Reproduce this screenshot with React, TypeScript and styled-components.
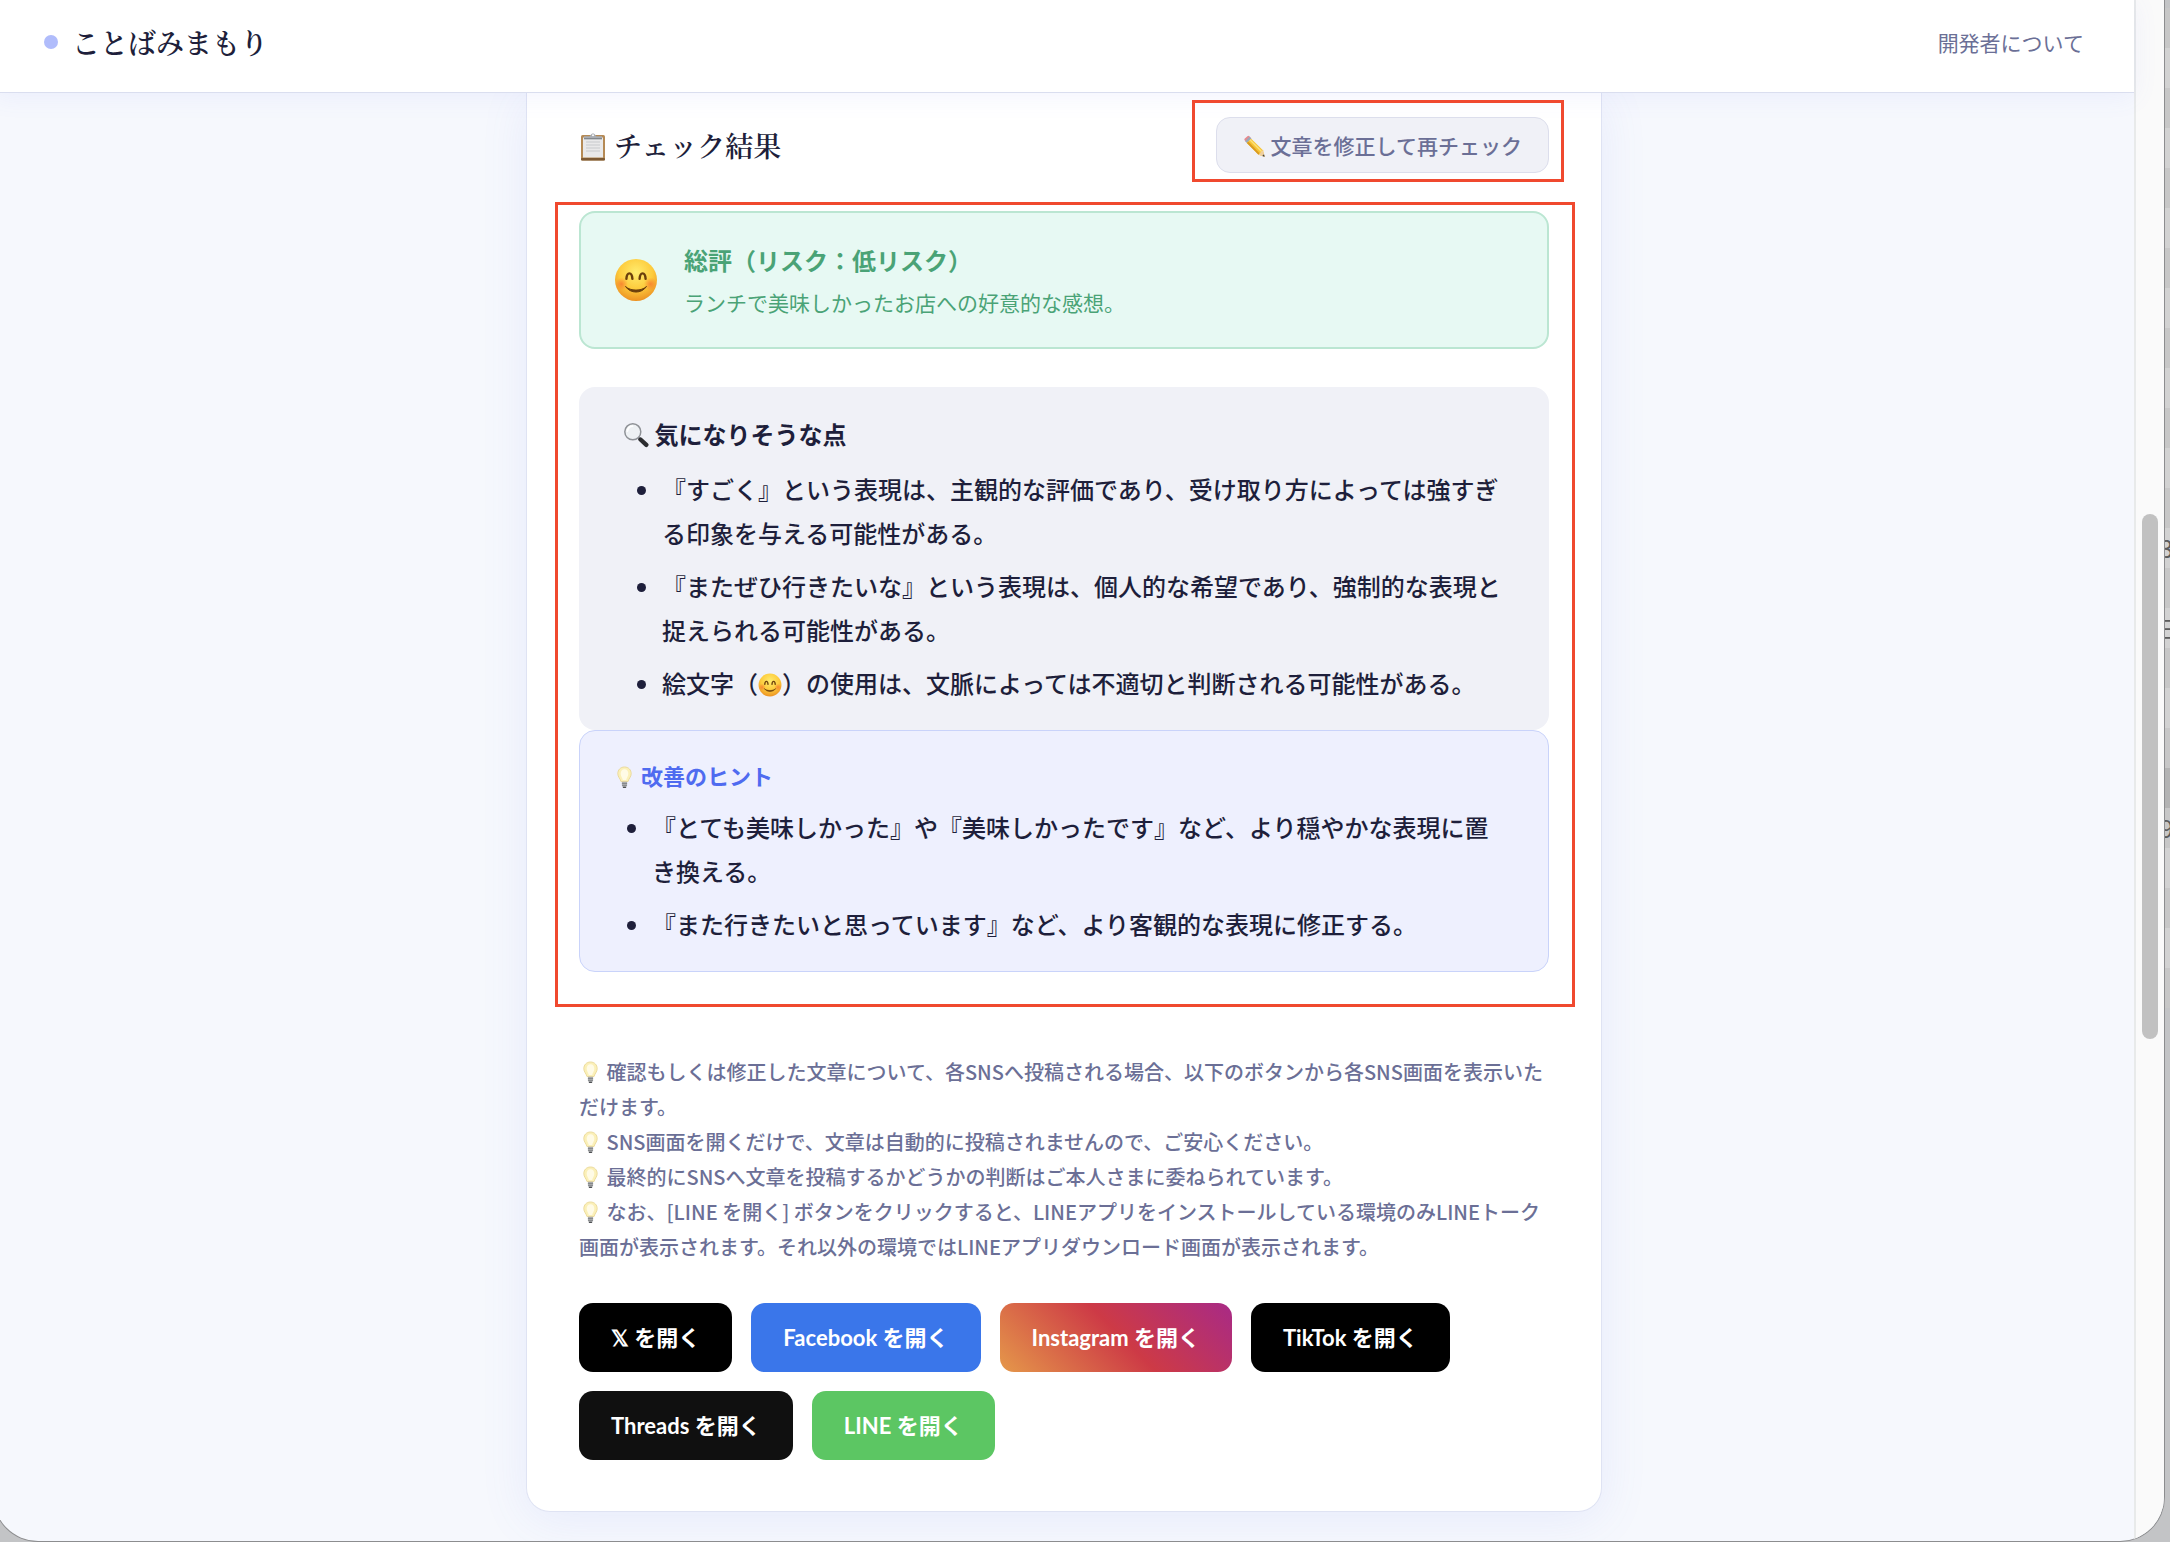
import React from "react";
import styled, { createGlobalStyle, css } from "styled-components";

const ink = "#1e1f3b";
const muted = "#6b6f96";
const sans = `"Noto Sans CJK JP", "Noto Sans", sans-serif`;
const serif = `"Noto Serif CJK JP", "Noto Sans CJK JP", serif`;
const label = `Lato, "Noto Sans CJK JP", sans-serif`;

const GlobalStyle = createGlobalStyle`
  *, *::before, *::after { box-sizing: border-box; }
  body { margin: 0; background: #c9cacc; color: ${ink}; font-family: ${sans}; }
  h1, h2, h3, p, ul { margin: 0; padding: 0; }
  button { font-family: inherit; cursor: pointer; }
`;

/* ---------- window ---------- */

const Desktop = styled.div`
  display: grid;
  grid-template-columns: minmax(0, 1fr) 6px;
  min-height: 100vh;
  margin-left: -6px;
  overflow: hidden;
  background: #c3c4c6;
`;

const BrowserWindow = styled.div`
  display: grid;
  grid-template-columns: minmax(0, 1fr) 30px;
  z-index: 1;
  margin-bottom: 1px;
  border-radius: 0 0 44px 44px;
  overflow: hidden;
  background: #f6f8fd;
  box-shadow: 0 0 0 1px #8c8d8f;
`;

const ScrollTrack = styled.div`
  display: grid;
  grid-template-rows: 514fr 526fr 502fr;
  padding: 0 6px;
  border-left: 2px solid #e8eaea;
  background: #fafafa;
`;

const ScrollThumb = styled.div`
  grid-row: 2;
  border-radius: 8px;
  background: #c1c1c1;
`;

const BackgroundRows = styled.div`
  padding-top: 8px;
  overflow: hidden;
`;

const BackgroundRow = styled.div<{ $tone: string }>`
  height: 40px;
  margin-left: -4px;
  background: ${(p) => p.$tone};
  color: #5c5c5c;
  font-size: 24px;
  line-height: 40px;
  white-space: nowrap;
`;

/* ---------- header ---------- */

const Header = styled.header`
  position: relative;
  display: flex;
  align-items: center;
  justify-content: space-between;
  padding: 22px 50px 30px;
  border-bottom: 1px solid #dadeef;
  background: #fff;
  box-shadow: 0 4px 24px rgba(99, 120, 240, 0.08);
  line-height: 40px;
`;

const Brand = styled.h1`
  display: flex;
  align-items: center;
  gap: 14px;
  font-family: ${serif};
  font-size: 28px;
  font-weight: 600;
`;

const BrandDot = styled.span`
  width: 14px;
  height: 14px;
  border-radius: 50%;
  background: #b0bcfb;
`;

const NavLink = styled.a`
  color: ${muted};
  font-size: 21px;
  text-decoration: none;
`;

/* ---------- card ---------- */

const Main = styled.main`
  padding-bottom: 29px;
`;

const Card = styled.section`
  max-width: 1076px;
  margin: 0 auto;
  padding: 24px 52px 51px;
  border: 1px solid #dfe3f3;
  border-top: 0;
  border-radius: 0 0 24px 24px;
  background: #fff;
  box-shadow: 0 8px 48px rgba(99, 120, 240, 0.1);
`;

const CardHead = styled.div`
  display: flex;
  align-items: center;
  justify-content: space-between;
  margin-bottom: 38px;
`;

const CardTitle = styled.h2`
  font-family: ${serif};
  font-size: 28px;
  font-weight: 600;
  line-height: 44px;
`;

const Marked = styled.div<{ $inset: string }>`
  position: relative;

  &::after {
    content: "";
    position: absolute;
    inset: ${(p) => p.$inset};
    border: 3px solid #f0492f;
    pointer-events: none;
  }
`;

const EditButton = styled.button`
  display: block;
  padding: 9px 26px;
  border: 1px solid #dcdeec;
  border-radius: 14px;
  background: #f0f1f7;
  color: ${muted};
  font-size: 21px;
  font-weight: 500;
  line-height: 36px;
`;

/* ---------- result panels ---------- */

const Summary = styled.section`
  display: flex;
  align-items: center;
  gap: 26px;
  margin-bottom: 38px;
  padding: 25px 33px;
  border: 2px solid #bbe6d2;
  border-radius: 16px;
  background: #e7f9f3;
  color: #4aa376;
`;

const SummaryTitle = styled.h3`
  font-size: 24px;
  font-weight: 700;
  line-height: 44px;
`;

const SummaryText = styled.p`
  font-size: 21px;
  line-height: 40px;
`;

const Panel = styled.section<{ $hint?: boolean }>`
  border-radius: 16px;
  ${(p) =>
    p.$hint
      ? css`
          padding: 22px 44px 25px 33px;
          border: 1px solid #c9d3fa;
          background: #eef0fe;
        `
      : css`
          padding: 25px 44px;
          background: #f0f1f7;
        `}
`;

const PanelTitle = styled.h3<{ $hint?: boolean }>`
  margin-bottom: ${(p) => (p.$hint ? 8 : 11)}px;
  color: ${(p) => (p.$hint ? "#4f6bf0" : ink)};
  font-size: ${(p) => (p.$hint ? 22 : 24)}px;
  font-weight: 700;
  line-height: 44px;
`;

const Points = styled.ul`
  padding-left: 39px;
  font-size: 24px;
  font-weight: 500;
  line-height: 44px;

  li + li {
    margin-top: 9px;
  }
`;

/* ---------- notes and share buttons ---------- */

const Notes = styled.div`
  margin: 82px 0 39px;
  color: ${muted};
  font-size: 20px;
  font-weight: 500;
  line-height: 35px;
`;

const ShareRow = styled.div`
  display: flex;
  flex-wrap: wrap;
  gap: 19px;
`;

const ShareButton = styled.button<{ $fill: string }>`
  padding: 0 32px;
  border: 0;
  border-radius: 14px;
  background: ${(p) => p.$fill};
  color: #fff;
  font-family: ${label};
  font-size: 22px;
  font-weight: 700;
  line-height: 69px;
`;

/* ---------- drawings ---------- */

const Glyph = styled.svg<{ $size: number }>`
  width: ${(p) => p.$size}px;
  height: ${(p) => p.$size}px;
  vertical-align: ${(p) => (p.$size > 40 ? "middle" : "-4px")};
  flex: none;
`;

function Clipboard() {
  return (
    <Glyph $size={28} viewBox="0 0 28 28" aria-hidden="true">
      <rect x="2" y="2" width="24" height="25.5" rx="1.6" fill="#b58a55" />
      <rect x="2" y="25" width="24" height="2.5" rx="1" fill="#7d5a35" />
      <rect x="4" y="4.5" width="20" height="20" fill="#e9e9ea" />
      <path d="M7 9h14M7 12h14M7 15h14M7 18h14" stroke="#d2d3d6" strokeWidth="1.4" />
      <path d="M5 3.2h5.5c.6 0 1.2-2.8 3.500-2.800s2.900 2.800 3.500 2.800H23v2.800H5z" fill="#a9adb3" />
      <circle cx="14" cy="2.200" r="1" fill="#fff" />
      <path d="M5 5.800h18" stroke="#74787e" strokeWidth="1" />
    </Glyph>
  );
}

function Pencil() {
  return (
    <Glyph $size={23} viewBox="0 0 24 24" aria-hidden="true">
      <path d="M1.600 3.800 4.600 1.200q1.200-.8 2.300.4l1.600 1.800-4.700 4.500-1.700-1.800q-1.200-1.300-.5-2.300z" fill="#e58a90" />
      <path d="M6.700 1.900 8.900 4 4.200 8.400 2.200 6.400z" fill="#9aa9b8" />
      <path d="M8.500 3.800 20.800 16 22.600 22.600 16.200 20.700 4 8.300z" fill="#f6c433" />
      <path d="M7.200 5 19.600 17.400" stroke="#fde07a" strokeWidth="1.500" />
      <path d="M4 8.300 16.200 20.700l1.300-1.300L5.500 6.900z" fill="#d99a22" />
      <path d="M20.800 16 22.600 22.600 16.200 20.700q.4-1.500 1.700-1.600.2-1.400 1.300-1.500.2-1.300 1.600-1.600z" fill="#efcf9f" />
      <path d="m21.900 20.100.7 2.500-2.500-.7z" fill="#3a3a3a" />
    </Glyph>
  );
}

function Magnifier() {
  return (
    <Glyph $size={26} viewBox="0 0 26 26" aria-hidden="true">
      <path d="m15 15.500 3.500 3" stroke="#8d8f93" strokeWidth="2.400" />
      <path d="m17.500 17.500 5.800 5.300" stroke="#2c2d30" strokeWidth="4.400" strokeLinecap="round" />
      <circle cx="9.800" cy="9.800" r="8" fill="#eef1f4" stroke="#8f9297" strokeWidth="1.500" />
      <path d="M4.500 9a5.500 5.500 0 0 1 5-4.800" fill="none" stroke="#fff" strokeWidth="1.800" strokeLinecap="round" />
    </Glyph>
  );
}

function Bulb() {
  return (
    <Glyph $size={23} viewBox="0 0 24 24" aria-hidden="true">
      <path
        d="M12 1C7.700 1 5 4.200 5 8c0 3.300 2.400 4.900 3.300 8.200h7.400C16.600 12.900 19 11.300 19 8c0-3.800-2.700-7-7-7z"
        fill="#fbf0b8"
        stroke="#e6d28c"
        strokeWidth=".8"
      />
      <path d="M12 3.500c-2.600 0-4 2-4 4.500 0 2.300 1.500 4 2.300 6.500h3.400c.8-2.500 2.300-4.200 2.300-6.500 0-2.500-1.400-4.500-4-4.500z" fill="#fffbe6" />
      <path d="M9.300 16.500h5.400v3.700q-.3 2.800-2.700 2.800t-2.700-2.800z" fill="#aeb0b2" />
      <path d="M9.300 18.200h5.400M9.500 20.200h5" stroke="#77797c" strokeWidth=".8" />
      <path d="M10.800 22.300h2.400" stroke="#4d4f52" strokeWidth="1.200" strokeLinecap="round" />
    </Glyph>
  );
}

function Smile({ size }: { size: number }) {
  const id = `face-${size}`;
  return (
    <Glyph $size={size} viewBox="0 0 44 44" role="img" aria-label="笑顔">
      <defs>
        <radialGradient id={`${id}-base`} cx=".5" cy=".32" r=".72">
          <stop offset="0" stopColor="#ffec6e" />
          <stop offset=".55" stopColor="#fdcb3c" />
          <stop offset="1" stopColor="#ea8a1f" />
        </radialGradient>
        <radialGradient id={`${id}-blush`}>
          <stop offset="0" stopColor="#f7752f" stopOpacity=".75" />
          <stop offset="1" stopColor="#f7752f" stopOpacity="0" />
        </radialGradient>
      </defs>
      <circle cx="22" cy="22" r="21" fill={`url(#${id}-base)`} />
      <circle cx="7.500" cy="26" r="6.500" fill={`url(#${id}-blush)`} />
      <circle cx="36.500" cy="26" r="6.500" fill={`url(#${id}-blush)`} />
      <path
        d="M12.400 20.800c.5-7.200 5.500-7.200 6 0M25.600 20.800c.5-7.200 5.500-7.200 6 0"
        fill="none"
        stroke="#6b3f0c"
        strokeWidth="2.400"
        strokeLinecap="round"
      />
      <path d="M11.500 28.500c5 7.400 16 7.400 21 0-5 4.800-16 4.800-21 0z" fill="#6b3f0c" stroke="#6b3f0c" strokeLinejoin="round" />
    </Glyph>
  );
}

/* ---------- data ---------- */

const hiddenText: Record<number, string> = { 13: "3", 15: "三", 20: "9" };

const rowTone = (index: number) => {
  if (index === 19) return "#b3b3b3";
  return index % 2 ? "#d2d2d2" : "#c7c7c7";
};

const shares = [
  { name: "𝕏", fill: "#000" },
  { name: "Facebook", fill: "#3a76ea" },
  { name: "Instagram", fill: "linear-gradient(45deg, #e5984a, #cd3a46 52%, #a82a86)" },
  { name: "TikTok", fill: "#000" },
  { name: "Threads", fill: "#101010" },
  { name: "LINE", fill: "#5cc663" },
];

const notes = [
  "確認もしくは修正した文章について、各SNSへ投稿される場合、以下のボタンから各SNS画面を表示いただけます。",
  "SNS画面を開くだけで、文章は自動的に投稿されませんので、ご安心ください。",
  "最終的にSNSへ文章を投稿するかどうかの判断はご本人さまに委ねられています。",
  "なお、[LINE を開く] ボタンをクリックすると、LINEアプリをインストールしている環境のみLINEトーク画面が表示されます。それ以外の環境ではLINEアプリダウンロード画面が表示されます。",
];

export default function App() {
  return (
    <>
      <GlobalStyle />
      <Desktop lang="ja">
        <BrowserWindow>
          <div>
            <Header>
              <Brand>
                <BrandDot />
                ことばみまもり
              </Brand>
              <NavLink href="#developer">開発者について</NavLink>
            </Header>
            <Main>
              <Card>
                <CardHead>
                  <CardTitle>
                    <Clipboard /> チェック結果
                  </CardTitle>
                  <Marked $inset="-17px -15px -9px -24px">
                    <EditButton type="button">
                      <Pencil /> 文章を修正して再チェック
                    </EditButton>
                  </Marked>
                </CardHead>

                <Marked $inset="-9px -26px -35px -24px">
                  <Summary>
                    <Smile size={44} />
                    <div>
                      <SummaryTitle>総評（リスク：低リスク）</SummaryTitle>
                      <SummaryText>ランチで美味しかったお店への好意的な感想。</SummaryText>
                    </div>
                  </Summary>

                  <Panel>
                    <PanelTitle>
                      <Magnifier /> 気になりそうな点
                    </PanelTitle>
                    <Points>
                      <li>『すごく』という表現は、主観的な評価であり、受け取り方によっては強すぎる印象を与える可能性がある。</li>
                      <li>『またぜひ行きたいな』という表現は、個人的な希望であり、強制的な表現と捉えられる可能性がある。</li>
                      <li>
                        絵文字（<Smile size={24} />）の使用は、文脈によっては不適切と判断される可能性がある。
                      </li>
                    </Points>
                  </Panel>

                  <Panel $hint>
                    <PanelTitle $hint>
                      <Bulb /> 改善のヒント
                    </PanelTitle>
                    <Points>
                      <li>『とても美味しかった』や『美味しかったです』など、より穏やかな表現に置き換える。</li>
                      <li>『また行きたいと思っています』など、より客観的な表現に修正する。</li>
                    </Points>
                  </Panel>
                </Marked>

                <Notes>
                  {notes.map((note) => (
                    <p key={note}>
                      <Bulb /> {note}
                    </p>
                  ))}
                </Notes>

                <ShareRow>
                  {shares.map((share) => (
                    <ShareButton key={share.name} type="button" $fill={share.fill}>
                      {share.name} を開く
                    </ShareButton>
                  ))}
                </ShareRow>
              </Card>
            </Main>
          </div>
          <ScrollTrack>
            <ScrollThumb />
          </ScrollTrack>
        </BrowserWindow>
        <BackgroundRows aria-hidden="true">
          {Array.from({ length: 25 }, (_, index) => (
            <BackgroundRow key={index} $tone={rowTone(index)}>
              {hiddenText[index]}
            </BackgroundRow>
          ))}
        </BackgroundRows>
      </Desktop>
    </>
  );
}
